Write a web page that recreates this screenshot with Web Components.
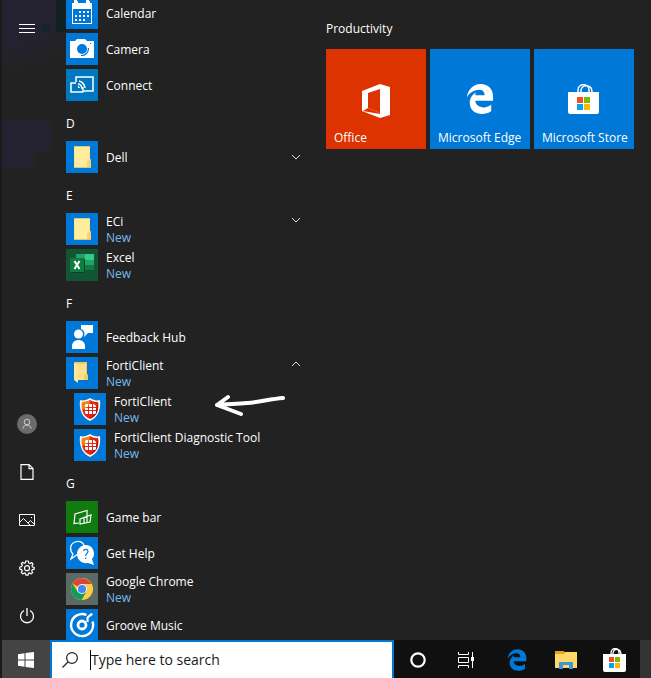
<!DOCTYPE html>
<html lang="en">
<head>
<meta charset="utf-8">
<title>Start menu</title>
<style>
html, body { height: 100%; margin: 0; }
body { background: #222; font-family: "Open Sans", "Noto Sans", sans-serif; font-size: 12px; line-height: 16px; color: #fff; overflow: hidden; }
</style>
</head>
<body>
<start-desktop></start-desktop>
<script>
const svg = (w, h, body, vb) => `<svg width="${w}" height="${h}" viewBox="${vb || `0 0 ${w} ${h}`}" fill="none" aria-hidden="true">${body}</svg>`;
const edgePath = 'M1 14C2 6 8 0 15.500 0C24 0 29 6 29 13V18H10C10 22 14 25 19 25C22 25 25 24 27 22V29C24 31 21 32 17 32C9 32 4 27 4 20C4 15 7 11 11 9C10 10 10 11 10 12H20C20 8 18 6 14 6C9 6 4 9 1 14Z';
const squares = (x, y, s, g) => [['#f25022',0,0],['#7fba00',1,0],['#00a4ef',0,1],['#ffb900',1,1]].map(([c,i,j]) => `<path fill="${c}" d="M${x+i*(s+g)} ${y+j*(s+g)}h${s}v${s}h-${s}z"/>`).join('');
const folder = '<path fill="#ffe28a" d="M8 5H24V18L25 19V27H8Z"/><path fill="#ffed9d" d="M9 6H23V18L21 20V26H9Z"/><path fill="#fbd071" d="M21 27V21L24 18L25 19V27Z"/><path d="M8 5.500H24M8 26.500H25" stroke="#b7bd76" stroke-width=".6"/>';
const shield = '<path fill="#fff6e9" d="M16 5C13 7 9 8 6 7C5 15 7 24 16 28C25 24 27 15 26 7C23 8 19 7 16 5Z"/><path fill="#e02615" d="M16 7C13 9 10 9 8 9C7 17 9 23 16 26C23 23 25 17 24 9C22 9 19 9 16 7Z"/><path fill="#f48218" d="M16 7C13 9 10 9 8 9C7.500 12 8 15 8.500 17C14 15 16 12 16 7Z"/><path fill="#bd1012" d="M24 9C25 17 23 23 16 26C20 21 23 17 24 9Z"/><path fill="#fff" d="M12 11h2v3h-3v-2zM15 11h3v3h-3zM19 11h1l2 2v1h-3zM11 15h3v2h-3zM15 15h3v2h-3zM19 15h3v2h-3zM11 18h3v3h-2l-1-1zM15 18h3v3h-3zM19 18h3v2l-1 1h-2z"/>';
const ICONS = {
  calendar: ['#0078d7', '<path fill="#fff" fill-rule="evenodd" d="M6 6H8V4H9V7H11V4H12V6H20V4H21V7H23V4H24V6H26V27H6ZM7 12V26H25V12Z"/><path fill="#fff" d="M8 3h3v5h-3zM20 3h3v5h-3z"/><path stroke="#fff" stroke-width="2" stroke-dasharray="2 2" d="M13 15H24M9 19H24M9 23H20"/>'],
  camera: ['#0078d7', '<path fill="#fff" d="M4 8H9L11 6H19L21 8H28V25H4Z"/><circle cx="16" cy="16" r="5" fill="#0078d7"/><path stroke="#0078d7" stroke-width="1.200" d="M22.500 15A7 7 0 0 1 15 22.500"/><path fill="#0078d7" d="M24 10h1v1h-1z"/>'],
  connect: ['#0078c1', '<path stroke="#fff" stroke-width="1.500" d="M10 13V8H27V22H18M10 14H5V23H17V19H15"/><path fill="#fff" d="M12 16L14 19H12Z"/><path stroke="#fff" stroke-width="1.500" d="M12 15Q15 15 16 19M13 12Q18 13 19 19"/>'],
  folder: ['#0078d7', folder],
  folderopen: ['#0078d7', '<path fill="#efcb6b" d="M9 5H21V17L22 18V23H12Z"/><path fill="#ffe69b" d="M8 5L12 8V26L8 23Z"/><path fill="#ffe08a" d="M12 7H20V17L18 19V23H12Z"/>'],
  excel: ['#125535', '<path fill="#21a366" d="M10 5H19V11H10Z"/><path fill="#33cb87" d="M19 5H28V11H19Z"/><path fill="#107c41" d="M10 11H19V16H10Z"/><path fill="#21a366" d="M19 11H28V16H19Z"/><path fill="#185c37" d="M10 16H19V21H10Z"/><path fill="#107c41" d="M19 16H28V21H19Z"/><path fill="#0a4127" d="M5 10H19V24H5Z"/><path fill="#107c41" d="M4 9H18V23H4Z"/><path stroke="#fff" stroke-width="2" d="M8.500 12L13.500 20M13.500 12L8.500 20"/>'],
  feedback: ['#0078d7', '<path fill="#fff" d="M15 4H27V12H22L18 16V12H15Z"/><circle cx="13" cy="13" r="5.500" fill="#0078d7"/><circle cx="12.500" cy="13" r="4.500" fill="#fff"/><path fill="#fff" d="M6 28V25C6 17 19 17 19 25V28Z"/>'],
  shield: ['#0078d7', shield],
  gamebar: ['#107c10', '<path stroke="#fff" stroke-width="1.200" d="M13 22L8 22.500L9 13L21 9.500V15M14 18L25 14L24 21L14 23ZM18 17V22M21 15.500V21"/>'],
  help: ['#0078d7', '<path stroke="#fff" stroke-width="1.300" d="M12 17L5 22L7 17C3 13 4 7 9 5C14 3 18 6 18 9"/><path fill="#fff" d="M20 8C25 8 28 12 28 17C28 19 27 21 26 22L28 28L22 26C16 27 11 23 11 17C11 12 15 8 20 8Z"/><path stroke="#0078d7" stroke-width="1.200" d="M17.500 14C18 11.500 22 12 22 14.500C22 16 19.700 16.500 19.700 19M19.700 20.500V22"/>'],
  chrome: ['#5a6a66', '<circle cx="16" cy="16" r="11" fill="#ffcd40"/><path fill="#db4437" d="M16 16L6.500 10.500A11 11 0 0 1 25.500 11H16Z"/><path fill="#0f9d58" d="M6.500 10.500A11 11 0 0 0 15.500 27L20.500 18.500L11.500 18.500Z"/><circle cx="16" cy="16" r="5" fill="#f1f1f1"/><circle cx="16" cy="16" r="4" fill="#4285f4"/>'],
  groove: ['#0078d7', '<path stroke="#fff" stroke-width="2.400" d="M20.500 6A11 11 0 1 0 26.500 12.500"/><path stroke="#fff" stroke-width="2.200" d="M26 4.500C25 7 22 6.500 21.500 9V13"/><circle cx="16" cy="16" r="4" stroke="#fff" stroke-width="2.800"/>']
};
const RAIL = {
  menu: svg(16, 10, '<path stroke="#fff" d="M0 .5H16M0 4.500H16M0 8.500H16"/>'),
  user: svg(20, 20, '<circle cx="10" cy="10" r="10" fill="#6b6b6b"/><circle cx="10" cy="8" r="2.800" stroke="#ccc"/><path stroke="#ccc" d="M6 14.500C6 10 14 10 14 14.500"/>'),
  document: svg(14, 16, '<path stroke="#fff" stroke-width="1.200" d="M1 .6H9L13 4.600V15.400H1ZM9 .6V4.600H13"/>'),
  pictures: svg(16, 12, '<path stroke="#fff" d="M.5 .5H15.500V11.500H.5ZM1 8L4.500 4.500L11 11M9 9L11.500 6.500L15 10"/><path fill="#fff" d="M12 3h1v1h-1z"/>'),
  settings: svg(16, 16, '<path stroke="#fff" stroke-width="1.200" stroke-linejoin="round" d="M6.700 1H9.300L9.700 3L11.100 3.600L12.800 2.500L14 4.200L13 5.700L13.400 7L15.200 7.400V9.200L13.300 9.600L12.700 11L13.700 12.500L12.200 13.900L10.700 12.900L9.500 13.400L9.100 15.200H6.900L6.500 13.400L5.200 12.900L3.700 13.900L2.200 12.400L3.300 10.900L2.700 9.600L.8 9.200V7L2.700 6.600L3.300 5.200L2.200 3.700L3.700 2.300L5.200 3.300L6.400 2.900Z"/><circle cx="8" cy="8.200" r="2.500" stroke="#fff" stroke-width="1.200"/>'),
  power: svg(16, 16, '<path stroke="#fff" stroke-width="1.300" d="M5 2.500A6.500 6.500 0 1 0 11 2.500M8 0V8"/>')
};
const TILES = {
  office: svg(30, 34, '<path fill="#fff" fill-rule="evenodd" d="M1 7L19 0L29 3V31L19 34L1 27V7ZM7 9V24L19 29V5Z"/><path fill="#dc3300" d="M2 27L7 24L19 29V30Z"/>'),
  edge: svg(28, 30, `<path fill="#fff" d="${edgePath}"/>`, '0 0 30 32'),
  store: svg(32, 30, '<path stroke="#fff" stroke-width="1.500" d="M10 9V6C10 -1 21 -1 21 6V9M13 8V6C14 0 24 0 24 8"/><path fill="#fff" d="M0 8H31V28Q31 30 29 30H2Q0 30 0 28Z"/>' + squares(9, 13, 6, 1))
};
const TASKS = {
  start: svg(16, 16, '<path fill="#fff" d="M0 2.200L6.500 1.300V7.500H0ZM7.500 1.100L16 0V7.500H7.500ZM0 8.500H6.500V14.700L0 13.800ZM7.500 8.500H16V16L7.500 14.900Z"/>'),
  cortana: svg(16, 16, '<circle cx="8" cy="8" r="6.700" stroke="#fff" stroke-width="2.200"/>'),
  taskview: svg(18, 16, '<path stroke="#fff" d="M1.500 0V2.500H11.500V0M1.500 16V13.500H11.500V16M1.500 5.500H11.500V10.500H1.500ZM15.500 0V16"/><path fill="#fff" d="M14 5h3v4h-3z"/>'),
  edge: svg(20, 22, `<path fill="#0078d7" d="${edgePath}"/>`, '0 0 30 32'),
  explorer: svg(22, 18, '<path fill="#e8a317" d="M0 0H9L10 2H21V6H0Z"/><path fill="#ffd968" d="M0 3H9L10 1H22V17H0Z"/><path fill="#3b97dc" d="M4 18V11H18V18H14V14H8V18Z"/>'),
  store: svg(24, 24, '<path stroke="#fff" stroke-width="1.300" d="M8 7V5C8 -1 16 -1 16 5V7M10 7V5C11 0 18 0 18 7"/><path fill="#fff" d="M0 6H23V22Q23 24 21 24H2Q0 24 0 22Z"/>' + squares(6, 9, 5, 1))
};
const BUTTON = 'button{all:unset;box-sizing:border-box;cursor:pointer}button:focus-visible{outline:1px solid #fff}svg{display:block;flex:none}';
const define = (name, render) => customElements.define(name, class extends HTMLElement {
  connectedCallback() {
    if (!this.shadowRoot) this.attachShadow({ mode: 'open' }).innerHTML = render(this);
  }
});

define('rail-button', el => `<style>${BUTTON}
:host{display:block}button{display:flex;width:100%;height:48px;align-items:center;justify-content:center}</style>
<button aria-label="${el.getAttribute('label')}">${RAIL[el.getAttribute('icon')]}</button>`);

define('side-rail', () => `<style>
:host{display:flex;flex-direction:column;justify-content:space-between;padding-top:5px}
</style>
<rail-button icon="menu" label="Expand"></rail-button>
<div><rail-button icon="user" label="Account"></rail-button><rail-button icon="document" label="Documents"></rail-button><rail-button icon="pictures" label="Pictures"></rail-button><rail-button icon="settings" label="Settings"></rail-button><rail-button icon="power" label="Power"></rail-button></div>`);

define('app-row', el => {
  const [bg, art] = ICONS[el.getAttribute('icon')];
  const chev = el.getAttribute('chevron');
  const isNew = el.hasAttribute('new');
  return `<style>${BUTTON}
:host{display:block}:host([nested]){padding-left:8px}
button{display:flex;width:100%;height:36px;padding:2px 0;align-items:center;gap:8px}
.icon{background:${bg};width:32px;height:32px;flex:none}
.text{flex:1;display:flex;flex-direction:column;white-space:nowrap;padding-top:2px}
small{font-size:12px;color:#76b9ed}
.chev{margin-right:11px}.top{align-self:flex-start;margin-top:4px}
</style><button${chev ? ` aria-expanded="${chev === 'up'}"` : ''}><span class="icon">${svg(32, 32, art)}</span>
<span class="text"><slot></slot>${isNew ? '<small>New</small>' : ''}</span>
${chev ? `<span class="chev ${isNew ? 'top' : ''}">${svg(10, 6, `<path stroke="#ddd" d="${chev === 'up' ? 'M1 5L5 1L9 5' : 'M1 1L5 5L9 1'}"/>`)}</span>` : ''}</button>`;
});

define('letter-row', () => `<style>${BUTTON}:host{display:block}button{display:flex;align-items:center;height:36px;padding-top:6px;width:100%}</style><button><slot></slot></button>`);

define('app-list', () => `<style>
:host{display:block;position:relative;overflow:hidden}
.rows{margin-top:-5px}
.arrow{position:absolute;left:147px;top:392px}
</style><div class="rows"><slot></slot></div>
<div class="arrow">${svg(74, 28, '<path stroke="#fff" stroke-width="4" stroke-linecap="round" stroke-linejoin="round" d="M70 6C58 7 46 10 34 11C22 12 12 12 4 13M15 5L4 13L28 22"/>')}</div>`);

define('app-tile', el => `<style>${BUTTON}
:host{display:block}
button{display:flex;flex-direction:column;width:100px;height:100px;background:${el.getAttribute('color')};padding:0 8px 3px}
.art{flex:1;display:flex;align-items:end;justify-content:center}
.name{white-space:nowrap;padding-top:${el.getAttribute('icon') === 'office' ? 12 : 16}px}
</style><button><span class="art">${TILES[el.getAttribute('icon')]}</span><span class="name"><slot></slot></span></button>`);

define('tile-group', el => `<style>
:host{display:block;padding-top:21px}
h2{margin:0 0 12px;font:inherit}
.tiles{display:flex;flex-wrap:wrap;gap:4px}
</style><h2>${el.getAttribute('heading')}</h2><div class="tiles"><slot></slot></div>`);

define('task-button', el => `<style>${BUTTON}
:host{display:flex;width:48px;flex:none}:host([pinned]){width:49px}
:host([active]){background:#444}
button{display:flex;flex:1;align-items:center;justify-content:center;padding-top:2px}
</style><button aria-label="${el.getAttribute('label')}">${TASKS[el.getAttribute('icon')]}</button>`);

define('search-box', () => `<style>
:host{display:block;flex:0 1 344px}
label{box-sizing:border-box;height:100%;display:flex;align-items:center;background:#fff;border:2px solid #0078d7;border-bottom:0;padding-left:10px;gap:12px}
input{flex:1;min-width:0;height:20px;border:0;outline:0;padding:0 0 0 1px;font:14px/20px "Open Sans","Noto Sans",sans-serif;color:#000;background:linear-gradient(#000,#000) 0 0/1px 20px no-repeat}
input::placeholder{color:#1a1a1a;opacity:1}svg{flex:none}
</style><label>${svg(16, 16, '<circle cx="10" cy="6" r="5.400" stroke="#222" stroke-width="1.200"/><path stroke="#222" stroke-width="1.200" d="M6 10L.5 15.500"/>')}<input type="text" aria-label="Search" placeholder="Type here to search"></label>`);

define('task-bar', () => `<style>
:host{display:flex;height:38px;background:#101010}
.pinned{display:flex;margin-left:2px}.end{margin-left:auto;width:11px;background:#333}
</style><task-button active icon="start" label="Start"></task-button><search-box></search-box>
<task-button icon="cortana" label="Cortana"></task-button><task-button icon="taskview" label="Task View"></task-button>
<div class="pinned"><task-button pinned icon="edge" label="Microsoft Edge"></task-button><task-button pinned icon="explorer" label="File Explorer"></task-button><task-button pinned icon="store" label="Microsoft Store"></task-button></div><div class="end"></div>`);

define('start-desktop', () => `<style>
:host{display:grid;grid-template-rows:minmax(0,1fr) auto;height:100vh;box-sizing:border-box;border-left:2px solid #1a1a1a}
main{display:grid;grid-template-columns:50px 246px minmax(0,1fr);column-gap:14px;min-height:0;background:
linear-gradient(#14232c,#14232c) 40px 24px/8px 8px no-repeat,
linear-gradient(#11211f,#11211f) 54px 0/10px 32px no-repeat,
linear-gradient(#242230,#242230) 0 120px/48px 31px no-repeat,
linear-gradient(#242230,#242230) 0 151px/32px 17px no-repeat,
linear-gradient(160deg,#242230 0,#242230 45%,#222 85%) 0 0/64px 72px no-repeat}
</style><main><side-rail></side-rail>
<app-list>
<app-row icon="calendar">Calendar</app-row><app-row icon="camera">Camera</app-row><app-row icon="connect">Connect</app-row>
<letter-row>D</letter-row><app-row icon="folder" chevron="down">Dell</app-row>
<letter-row>E</letter-row><app-row icon="folder" new chevron="down">ECi</app-row><app-row icon="excel" new>Excel</app-row>
<letter-row>F</letter-row><app-row icon="feedback">Feedback Hub</app-row><app-row icon="folderopen" new chevron="up">FortiClient</app-row>
<app-row nested icon="shield" new>FortiClient</app-row><app-row nested icon="shield" new>FortiClient Diagnostic Tool</app-row>
<letter-row>G</letter-row><app-row icon="gamebar">Game bar</app-row><app-row icon="help">Get Help</app-row><app-row icon="chrome" new>Google Chrome</app-row><app-row icon="groove">Groove Music</app-row>
</app-list>
<tile-group heading="Productivity"><app-tile icon="office" color="#dc3300">Office</app-tile><app-tile icon="edge" color="#0078d7">Microsoft Edge</app-tile><app-tile icon="store" color="#0078d7">Microsoft Store</app-tile></tile-group>
</main><task-bar></task-bar>`);
</script>
</body>
</html>
